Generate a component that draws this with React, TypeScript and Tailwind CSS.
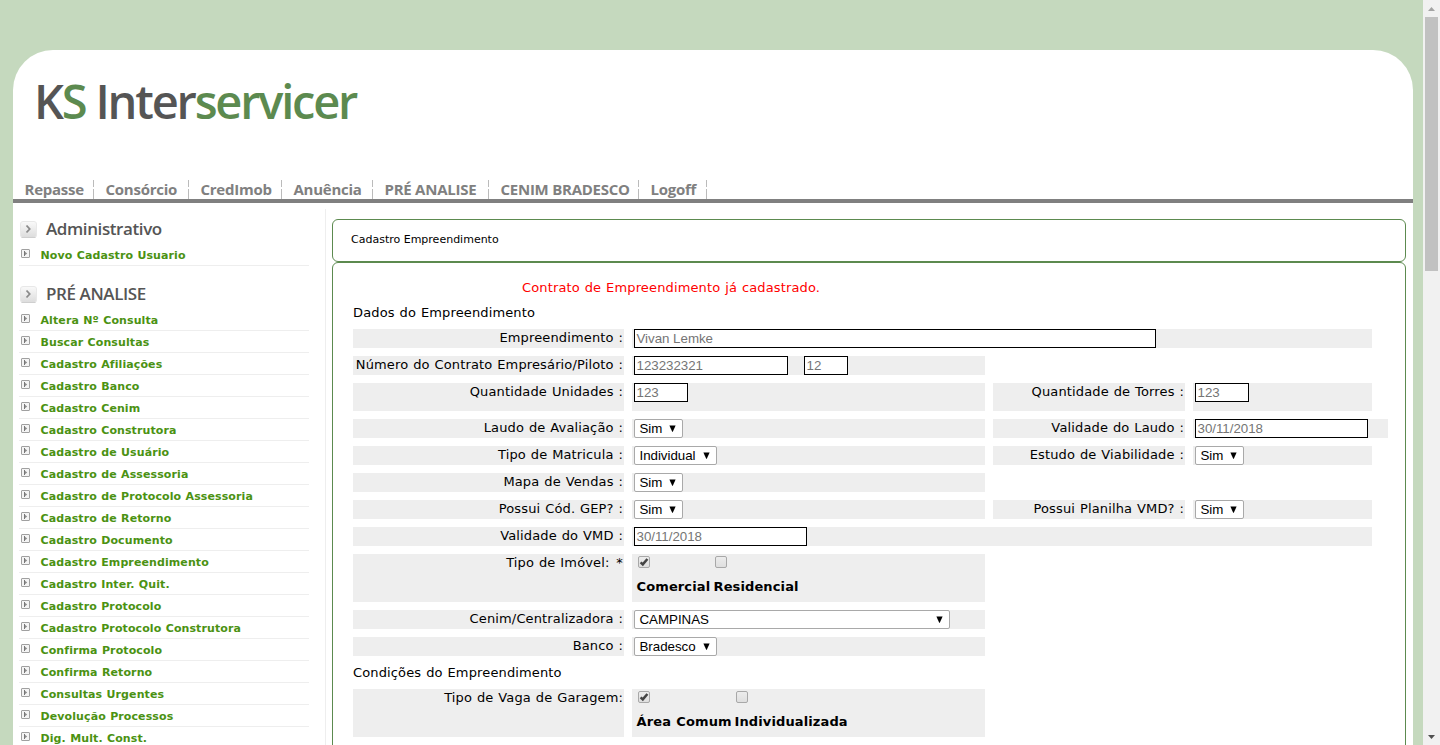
import type { ReactNode } from "react";

const NAV = [
  { label: "Repasse", cls: "w-[81px]" },
  { label: "Consórcio", cls: "w-[95px]" },
  { label: "CredImob", cls: "w-[93px]" },
  { label: "Anuência", cls: "w-[91px]" },
  { label: "PRÉ ANALISE", cls: "w-[116px]" },
  { label: "CENIM BRADESCO", cls: "w-[150px]" },
  { label: "Logoff", cls: "w-[68px]" },
];

const PRE_ANALISE = [
  "Altera Nº Consulta",
  "Buscar Consultas",
  "Cadastro Afiliações",
  "Cadastro Banco",
  "Cadastro Cenim",
  "Cadastro Construtora",
  "Cadastro de Usuário",
  "Cadastro de Assessoria",
  "Cadastro de Protocolo Assessoria",
  "Cadastro de Retorno",
  "Cadastro Documento",
  "Cadastro Empreendimento",
  "Cadastro Inter. Quit.",
  "Cadastro Protocolo",
  "Cadastro Protocolo Construtora",
  "Confirma Protocolo",
  "Confirma Retorno",
  "Consultas Urgentes",
  "Devolução Processos",
  "Dig. Mult. Const.",
];

function HeadingIcon() {
  return (
    <svg width="17" height="17" viewBox="0 0 17 17" className="shrink-0">
      <defs>
        <linearGradient id="btn" x1="0" y1="0" x2="0" y2="1">
          <stop offset="0" stopColor="#fafafa" />
          <stop offset="1" stopColor="#dcdcdc" />
        </linearGradient>
      </defs>
      <rect x="0.5" y="0.5" width="16" height="16" rx="2.5" fill="url(#btn)" stroke="#e8e8e8" />
      <path d="M1.5 16.5h14" stroke="#cfcfcf" />
      <path d="M6.5 4.5l3.2 3.5-3.2 3.5" fill="none" stroke="#8a8a8a" strokeWidth="1.8" />
    </svg>
  );
}

function ItemIcon() {
  return (
    <svg width="9" height="9" viewBox="0 0 9 9" className="mt-[5px] shrink-0">
      <rect x="0.5" y="0.5" width="8" height="8" rx="0.5" fill="#f4f4f4" stroke="#a0a0a0" />
      <path d="M3 2v5l3.2-2.5z" fill="#8c8c8c" />
      <path d="M3.5 2v5" stroke="#777" />
    </svg>
  );
}

function Group({ title, items }: { title: string; items: string[] }) {
  return (
    <section className="mb-[14px]">
      <h2 className="flex h-[29px] items-start gap-[9px] pl-px">
        <span className="pt-[6px]">
          <HeadingIcon />
        </span>
        <span className="font-['Open_Sans',sans-serif] text-[17px] leading-[27px] font-semibold tracking-[-0.4px] whitespace-nowrap text-[#555]">
          {title}
        </span>
      </h2>
      <ul>
        {items.map((t) => (
          <li key={t} className="flex h-[22px] gap-[10.5px] border-b border-[#eee] pl-[2px]">
            <ItemIcon />
            <span className="text-[11px] leading-[24px] font-bold tracking-[0.1px] whitespace-nowrap text-[#4b9212] [word-spacing:0.4px]">
              {t}
            </span>
          </li>
        ))}
      </ul>
    </section>
  );
}

function Field({ value, cls }: { value: string; cls: string }) {
  return (
    <div
      className={`h-[19px] shrink-0 border border-black bg-white pl-[1.5px] font-['Liberation_Sans',Arial,sans-serif] text-[13.33px] leading-[18px] tracking-[-0.03px] text-[#757575] [word-spacing:0px] ${cls}`}
    >
      {value}
    </div>
  );
}

function Pick({ value, cls }: { value: string; cls: string }) {
  return (
    <div
      className={`flex h-[19px] shrink-0 items-center justify-between rounded-[2px] border border-[#a9a9a9] bg-white pr-[6px] pl-[4.5px] font-['Liberation_Sans',Arial,sans-serif] text-[13.33px] leading-[17px] tracking-[-0.03px] text-black ${cls}`}
    >
      {value}
      <svg width="7" height="7" viewBox="0 0 7 7">
        <path d="M0.4 0.6h6.2L3.8 6.8h-0.6z" fill="#000" />
      </svg>
    </div>
  );
}

function Check({ on }: { on?: boolean }) {
  return (
    <svg width="13" height="13" viewBox="0 0 13 13" className="block">
      <defs>
        <linearGradient id="chk" x1="0" y1="0" x2="0" y2="1">
          <stop offset="0" stopColor="#ededed" />
          <stop offset="1" stopColor="#dedede" />
        </linearGradient>
      </defs>
      <rect x="0.5" y="0.5" width="11" height="11" rx="1.5" fill="url(#chk)" stroke="#a8a8a8" />
      {on && <path d="M2.6 6.4l2.2 2L9.4 3" fill="none" stroke="#444" strokeWidth="2.5" />}
    </svg>
  );
}

function Label({ children }: { children: ReactNode }) {
  return <div className="bg-[#eee] pr-px text-right leading-[18px] whitespace-nowrap">{children}</div>;
}

function Cell({ children, cls = "" }: { children: ReactNode; cls?: string }) {
  return <div className={`flex items-start bg-[#eee] pl-[2px] ${cls}`}>{children}</div>;
}

function Row({ children, h = "h-[19px]" }: { children: ReactNode; h?: string }) {
  return <div className={`grid grid-cols-[271px_353px_192px_179px] gap-x-2 ${h}`}>{children}</div>;
}

function Options({ first, second, cls }: { first: string; second: string; cls: string }) {
  return (
    <div className={`grid pt-[2px] pl-[2px] ${cls}`}>
      {[first, second].map((t, i) => (
        <div key={t} className="flex flex-col gap-[9px]">
          <div className="pl-[2px]">
            <Check on={i === 0} />
          </div>
          <b className="pl-[0.5px] leading-[18px] tracking-[0.12px] whitespace-nowrap">{t}</b>
        </div>
      ))}
    </div>
  );
}

export default function App() {
  return (
    <div className="flex h-[745px] w-[1440px] overflow-hidden bg-[#c5d9be] font-['DejaVu_Sans',Verdana,sans-serif] text-black">
      <div className="h-full w-[1423px] pt-[50px] pl-[13px]">
        <div className="flex h-[695px] w-[1400px] flex-col rounded-t-[40px] bg-white">
          <header className="flex h-[153px] flex-col justify-between border-b-4 border-[#808080]">
            <h1 className="pt-[18px] pl-[21px] font-['Open_Sans',sans-serif] text-[47px] leading-[66px] font-semibold tracking-[-2.2px] whitespace-nowrap text-[#555]">
              K<span className="text-[#5c8a4f]">S</span> Inter<span className="text-[#5c8a4f]">servicer</span>
            </h1>
            <nav className="flex h-[19px]">
              {NAV.map((n) => (
                <div key={n.label} className={`flex justify-between pl-[11.5px] ${n.cls}`}>
                  <span className="font-['Open_Sans',sans-serif] text-[15px] leading-[19px] font-bold tracking-[-0.25px] whitespace-nowrap text-[#808080]">
                    {n.label}
                  </span>
                  <span className="flex flex-col justify-between">
                    <i className="h-[7px] w-px bg-[#bbb]" />
                    <i className="h-[10px] w-px bg-[#bbb]" />
                  </span>
                </div>
              ))}
            </nav>
          </header>

          <div className="flex min-h-0 flex-1 overflow-hidden">
            <aside className="w-[296px] shrink-0 pt-[12px] pl-[6px]">
              <Group title="Administrativo" items={["Novo Cadastro Usuario"]} />
              <Group title="PRÉ ANALISE" items={PRE_ANALISE} />
            </aside>
            <div className="mt-[6px] ml-[16px] w-px shrink-0 bg-[#eee]" />
            <main className="ml-[6px] w-[1074px] shrink-0 pt-[16px]">
              <div className="h-[43px] rounded-[6px] border border-[#5c8a4f] pl-[18px] text-[11px] leading-[39px]">
                Cadastro Empreendimento
              </div>
              <div className="h-[560px] rounded-[6px] border border-[#5c8a4f] pt-[16px] pl-[20px] text-[13px] tracking-[0.14px] [word-spacing:0.6px]">
                <div className="flex flex-col gap-y-2">
                  <p className="h-[17px] pl-[169px] leading-[17px] text-[#f00]">Contrato de Empreendimento já cadastrado.</p>
                  <p className="h-[17px] leading-[17px]">Dados do Empreendimento</p>
                  <Row>
                    <Label>Empreendimento :</Label>
                    <Cell cls="col-span-3">
                      <Field value="Vivan Lemke" cls="w-[522px]" />
                    </Cell>
                  </Row>
                  <Row>
                    <Label>Número do Contrato Empresário/Piloto :</Label>
                    <Cell cls="gap-4">
                      <Field value="123232321" cls="w-[154px]" />
                      <Field value="12" cls="w-[44px]" />
                    </Cell>
                  </Row>
                  <Row h="h-[28px]">
                    <Label>Quantidade Unidades :</Label>
                    <Cell>
                      <Field value="123" cls="w-[54px]" />
                    </Cell>
                    <Label>Quantidade de Torres :</Label>
                    <Cell>
                      <Field value="123" cls="w-[54px]" />
                    </Cell>
                  </Row>
                  <Row>
                    <Label>Laudo de Avaliação :</Label>
                    <Cell>
                      <Pick value="Sim" cls="w-[49px]" />
                    </Cell>
                    <Label>Validade do Laudo :</Label>
                    <Cell cls="w-[195px]">
                      <Field value="30/11/2018" cls="w-[173px]" />
                    </Cell>
                  </Row>
                  <Row>
                    <Label>Tipo de Matricula :</Label>
                    <Cell>
                      <Pick value="Individual" cls="w-[83px]" />
                    </Cell>
                    <Label>Estudo de Viabilidade :</Label>
                    <Cell>
                      <Pick value="Sim" cls="w-[49px]" />
                    </Cell>
                  </Row>
                  <Row>
                    <Label>Mapa de Vendas :</Label>
                    <Cell>
                      <Pick value="Sim" cls="w-[49px]" />
                    </Cell>
                  </Row>
                  <Row>
                    <Label>Possui Cód. GEP? :</Label>
                    <Cell>
                      <Pick value="Sim" cls="w-[49px]" />
                    </Cell>
                    <Label>Possui Planilha VMD? :</Label>
                    <Cell>
                      <Pick value="Sim" cls="w-[49px]" />
                    </Cell>
                  </Row>
                  <Row>
                    <Label>Validade do VMD :</Label>
                    <Cell cls="col-span-3">
                      <Field value="30/11/2018" cls="w-[173px]" />
                    </Cell>
                  </Row>
                  <Row h="h-[48px]">
                    <Label>
                      Tipo de Imóvel:<span className="pl-[2px]"> *</span>
                    </Label>
                    <Cell>
                      <Options first="Comercial" second="Residencial" cls="grid-cols-[77px_100px]" />
                    </Cell>
                  </Row>
                  <Row>
                    <Label>Cenim/Centralizadora :</Label>
                    <Cell>
                      <Pick value="CAMPINAS" cls="w-[316px]" />
                    </Cell>
                  </Row>
                  <Row>
                    <Label>Banco :</Label>
                    <Cell>
                      <Pick value="Bradesco" cls="w-[83px]" />
                    </Cell>
                  </Row>
                  <p className="h-[17px] leading-[17px]">Condições do Empreendimento</p>
                  <Row h="h-[48px]">
                    <Label>Tipo de Vaga de Garagem:</Label>
                    <Cell>
                      <Options first="Área Comum" second="Individualizada" cls="grid-cols-[98px_120px]" />
                    </Cell>
                  </Row>
                </div>
              </div>
            </main>
          </div>
        </div>
      </div>

      <div className="flex h-full w-[17px] flex-col items-center justify-between bg-[#f1f1f1]">
        <div className="flex flex-col items-center">
          <div className="flex h-[17px] items-center">
            <svg width="7" height="4" viewBox="0 0 7 4">
              <path d="M3.5 0L7 4H0z" fill="#a3a3a3" />
            </svg>
          </div>
          <div className="h-[254px] w-[13px] bg-[#c1c1c1]" />
        </div>
        <div className="flex h-[17px] items-center">
          <svg width="7" height="4" viewBox="0 0 7 4">
            <path d="M3.5 4L7 0H0z" fill="#505050" />
          </svg>
        </div>
      </div>
    </div>
  );
}
